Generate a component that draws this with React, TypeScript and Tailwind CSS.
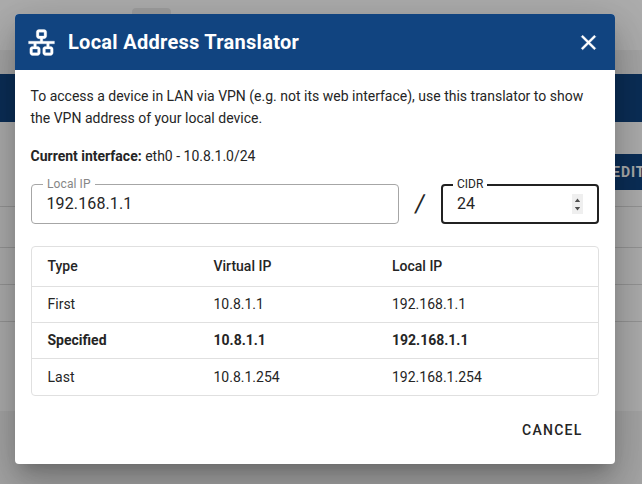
import React from "react";

const LAN_PATH =
  "M10,2C8.89,2 8,2.89 8,4V7C8,8.11 8.89,9 10,9H11V11H2V13H6V15H5C3.89,15 3,15.89 3,17V20C3,21.11 3.89,22 5,22H9C10.11,22 11,21.11 11,20V17C11,15.89 10.11,15 9,15H8V13H16V15H15C13.89,15 13,15.89 13,17V20C13,21.11 13.89,22 15,22H19C20.11,22 21,21.11 21,20V17C21,15.89 20.11,15 19,15H18V13H22V11H13V9H14C15.11,9 16,8.11 16,7V4C16,2.89 15.11,2 14,2H10M10,4H14V7H10V4M5,17H9V20H5V17M15,17H19V20H15V17Z";
const CLOSE_PATH =
  "M19,6.41L17.59,5L12,10.59L6.41,5L5,6.41L10.59,12L5,17.59L6.41,19L12,13.41L17.59,19L19,17.59L13.41,12L19,6.41Z";

type Row = { type: string; virtual: string; local: string; className: string };

const rows: Row[] = [
  { type: "First", virtual: "10.8.1.1", local: "192.168.1.1", className: "h-9 border-t" },
  { type: "Specified", virtual: "10.8.1.1", local: "192.168.1.1", className: "h-9 border-t font-bold" },
  { type: "Last", virtual: "10.8.1.254", local: "192.168.1.254", className: "h-[37px] border-t" },
];

function PageBehind() {
  return (
    <div className="flex h-[484px] flex-col bg-[#f4f4f4]">
      <div className="flex h-[50px] items-start bg-white pt-2 pl-[132px]">
        <div className="h-9 w-[39px] rounded bg-[#ebebeb]" />
      </div>
      <div className="h-6" />
      <div className="h-12 bg-[#114480]" />
      <div className="flex h-[289px] flex-col bg-white">
        <div className="flex h-[85px] justify-end overflow-hidden border-b border-[#dcdcdc] pt-8">
          <div className="flex h-9 w-[42px] items-center bg-[#114480] pl-3 text-sm font-bold tracking-[1px] text-white">
            EDIT
          </div>
        </div>
        <div className="h-[41px] border-b border-[#dcdcdc]" />
        <div className="h-[37px] border-b border-[#dcdcdc]" />
        <div className="h-[37px] border-b border-[#dcdcdc]" />
      </div>
    </div>
  );
}

function Dialog() {
  return (
    <div className="h-[450px] w-[600px] overflow-hidden rounded bg-white text-[#252525] shadow-[0_11px_15px_-7px_rgba(0,0,0,0.2),0_24px_38px_3px_rgba(0,0,0,0.14),0_9px_46px_8px_rgba(0,0,0,0.12)]">
      <header className="flex h-14 items-center bg-[#114480] pr-3.5 pl-[11px] text-white">
        <svg viewBox="0 0 24 24" className="size-[31px]" fill="currentColor" stroke="currentColor" strokeWidth="0.25">
          <path d={LAN_PATH} />
        </svg>
        <h1 className="ml-[11px] flex-1 text-xl leading-8 font-bold tracking-[0.28px]">Local Address Translator</h1>
        <svg viewBox="0 0 24 24" className="size-[25px]" fill="currentColor" stroke="currentColor" strokeWidth="0.4">
          <path d={CLOSE_PATH} />
        </svg>
      </header>

      <div className="px-4 pt-[15px]">
        <p className="-ml-[0.5px] text-sm leading-[22px] whitespace-nowrap">
          To access a device in LAN via VPN (e.g. not its web interface), use this translator to show
          <br />
          the VPN address of your local device.
        </p>
        <p className="mt-4 -ml-[0.5px] text-sm leading-[22px]">
          <b>Current interface:</b> eth0 - 10.8.1.0/24
        </p>

        <div className="mt-[17px] flex h-10">
          <div className="relative flex w-[368px] items-center rounded border border-[#a6a6a6] pl-[14.5px] text-base tracking-[0.12px]">
            <span className="absolute -top-2 left-[11px] bg-white px-1 text-xs leading-[14px] tracking-[0.1px] text-[#868686]">
              Local IP
            </span>
            192.168.1.1
          </div>
          <div className="flex w-[42px] -skew-x-6 items-center justify-center text-[25px]">/</div>
          <div className="relative flex w-[158px] items-center justify-between rounded border-2 border-[#212121] pr-3.5 pl-3.5 text-base">
            <span className="absolute -top-[9px] left-2.5 bg-white px-1 text-xs leading-[14px]">CIDR</span>
            24
            <span className="flex h-5 w-[11px] items-center justify-center bg-[#efefef]">
              <svg viewBox="0 0 11 20" className="h-5 w-[11px]" fill="#505050">
                <path d="M5.5 4.5L8.2 8H2.8zM5.5 16.5L8.2 13H2.8z" />
              </svg>
            </span>
          </div>
        </div>

        <div className="mt-[22px] overflow-hidden rounded border border-[#e0e0e0]">
          <table className="w-full table-fixed border-collapse text-left text-sm">
            <colgroup>
              <col className="w-[166px]" />
              <col className="w-[178px]" />
              <col />
            </colgroup>
            <thead>
              <tr className="h-[39px] font-medium">
                <th className="pl-[15.5px] font-medium">Type</th>
                <th className="pl-[15.5px] font-medium">Virtual IP</th>
                <th className="pl-4 font-medium">Local IP</th>
              </tr>
            </thead>
            <tbody>
              {rows.map((r) => (
                <tr key={r.type} className={`${r.className} border-[#e0e0e0]`}>
                  <td className="pl-[15.5px]">{r.type}</td>
                  <td className="pl-[15.5px]">{r.virtual}</td>
                  <td className="pl-4">{r.local}</td>
                </tr>
              ))}
            </tbody>
          </table>
        </div>

        <div className="mt-4 flex justify-end pr-[16.5px]">
          <button className="h-9 text-sm font-medium tracking-[1.25px]">CANCEL</button>
        </div>
      </div>
    </div>
  );
}

export default function App() {
  return (
    <div className="relative h-[484px] w-[642px] overflow-hidden font-[Roboto,sans-serif]">
      <PageBehind />
      <div className="absolute inset-0 bg-black/32 pt-3.5 pl-[15px]">
        <Dialog />
      </div>
    </div>
  );
}
